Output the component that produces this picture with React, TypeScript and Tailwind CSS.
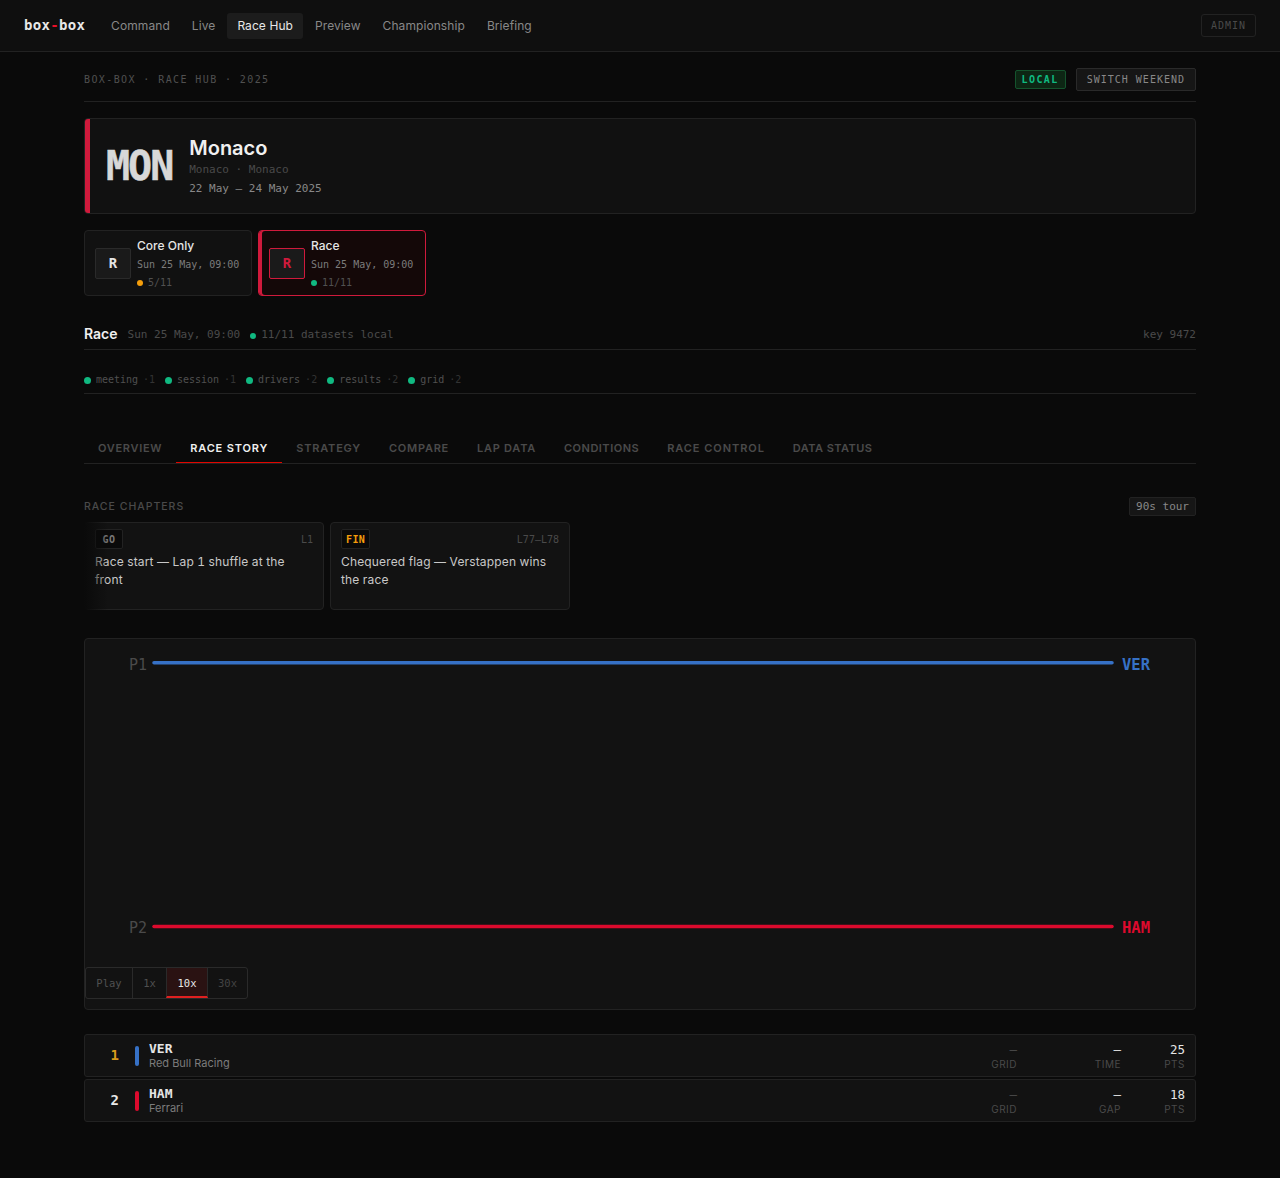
import React from "react";

const mono = "font-['DejaVu_Sans_Mono','Liberation_Mono',monospace]";

const nav = ["Command", "Live", "Race Hub", "Preview", "Championship", "Briefing"];
const tabs: [string, string][] = [
  ["OVERVIEW", "tracking-[0.7px]"],
  ["RACE STORY", "tracking-[0.85px]"],
  ["STRATEGY", "tracking-[0.8px]"],
  ["COMPARE", "tracking-[0.75px]"],
  ["LAP DATA", "tracking-[0.75px]"],
  ["CONDITIONS", "tracking-[0.5px]"],
  ["RACE CONTROL", "tracking-[0.95px]"],
  ["DATA STATUS", "tracking-[0.45px]"],
];
const datasets: [string, string][] = [["meeting", "1"], ["session", "1"], ["drivers", "2"], ["results", "2"], ["grid", "2"]];

function SessionCard({ title, count, dot, active }: { title: string; count: string; dot: string; active?: boolean }) {
  return (
    <div className={`flex h-[66px] w-[168px] items-center gap-[6px] rounded-[4px] border pl-[10px] ${active ? "border-[#d01a3c] bg-[#140808] shadow-[inset_3px_0_0_#d01a3c]" : "border-[#222222] bg-[#111111]"}`}>
      <div className={`flex h-[31px] w-[36px] items-center justify-center rounded-[2px] border bg-[#1a1a1a] text-[14px] font-bold ${mono} ${active ? "border-[#d01a3c] text-[#d01a3c]" : "border-[#2a2a2a] text-[#e5e5e5]"}`}>R</div>
      <div className="flex flex-col pt-[2px]">
        <div className="text-[12px] font-medium leading-[16px] text-[#e5e5e5]">{title}</div>
        <div className={`mt-[3px] text-[10px] leading-[16px] text-[#7c7c7c] ${mono}`}>Sun 25 May, 09:00</div>
        <div className={`mt-[2px] flex items-center gap-[5px] text-[10px] leading-[16px] text-[#505050] ${mono}`}>
          <span className={`h-[6px] w-[6px] rounded-full ${dot}`} />
          {count}
        </div>
      </div>
    </div>
  );
}

function Chapter({ tag, tagClass, laps, text }: { tag: string; tagClass: string; laps: string; text: string }) {
  return (
    <div className="h-[88px] w-[240px] rounded-[4px] border border-[#222222] bg-[#121212] px-[10px] pt-[6px]">
      <div className="flex items-center justify-between">
        <span className={`flex h-[20px] min-w-[28px] items-center justify-center rounded-[2px] border border-[#222222] bg-[#0a0a0a] px-[4px] text-[10px] font-bold tracking-[0.4px] ${mono} ${tagClass}`}>{tag}</span>
        <span className={`text-[10px] text-[#4a4a4a] ${mono}`}>{laps}</span>
      </div>
      <div className="mt-[4px] text-[12px] leading-[18px] tracking-[0.15px] tabular-nums text-[#c8c8c8]">{text}</div>
    </div>
  );
}

function Stat({ value, label, valueClass, wrap }: { value: string; label: string; valueClass: string; wrap: string }) {
  return (
    <div className={`flex w-[60px] flex-col items-end pt-[1px] ${wrap}`}>
      <div className={`mt-[1px] text-[12.5px] leading-[16px] ${mono} ${valueClass}`}>{value}</div>
      <div className="-mt-[1px] text-[10px] leading-[14px] tracking-[0.5px] text-[#4a4a4a]">{label}</div>
    </div>
  );
}

function ResultRow({ pos, posClass, code, team, color, l3, first }: { pos: string; posClass: string; code: string; team: string; color: string; l3: string; first: string }) {
  return (
    <div className="flex h-[43px] items-center rounded-[3px] border border-[#222222] bg-[#121212] pr-[10px]">
      <div className={`w-[34px] text-right text-[14px] font-bold ${mono} ${posClass}`}>{pos}</div>
      <div className={`ml-[16px] h-[20px] w-[4px] rounded-[2px] ${color}`} />
      <div className="ml-[10px] flex-1">
        <div className={`text-[13px] font-bold leading-[15px] text-[#e5e5e5] ${mono}`}>{code}</div>
        <div className="text-[11px] leading-[14px] text-[#7c7c7c]">{team}</div>
      </div>
      <Stat value="–" label="GRID" valueClass="text-[#4a4a4a]" wrap="" />
      <Stat value="—" label={l3} valueClass="text-[#e5e5e5]" wrap="ml-[44px]" />
      <Stat value={first} label="PTS" valueClass="text-[#e5e5e5]" wrap="ml-[4px]" />
    </div>
  );
}

export default function App() {
  return (
    <div className="min-h-[1178px] bg-[#0a0a0a] font-['Inter','Noto_Sans',sans-serif]">
      <header className="flex h-[52px] items-center border-b border-[#222222] bg-[#0f0f0f] px-[24px]">
        <div className={`text-[14px] font-bold tracking-[0.3px] text-[#e8e8e8] ${mono}`}>
          box<span className="text-[#e8102a]">-</span>box
        </div>
        <nav className="ml-[16px] flex items-center gap-[2px]">
          {nav.map((n) => (
            <div key={n} className={`flex h-[26px] items-center rounded-[3px] px-[10px] text-[12px] tracking-[0.08px] ${n === "Race Hub" ? "bg-[#1c1c1c] text-[#e8e8e8]" : "text-[#888888]"}`}>{n}</div>
          ))}
        </nav>
        <div className={`ml-auto flex h-[23px] items-center rounded-[3px] border border-[#222222] px-[9px] text-[10px] tracking-[1px] text-[#4a4a4a] ${mono}`}>ADMIN</div>
      </header>

      <main className="mx-auto w-[1160px] px-[24px]">
        <div className="flex h-[50px] items-center justify-between border-b border-[#222222] pt-[6px]">
          <div className={`text-[10px] tracking-[1.4px] text-[#505050] ${mono}`}>BOX-BOX · RACE HUB · 2025</div>
          <div className="flex items-center gap-[10px]">
            <span className={`flex h-[19px] items-center rounded-[2px] border border-[#14532d] bg-[#0d2614] px-[6px] text-[10px] font-bold tracking-[1.4px] text-[#10b981] ${mono}`}>LOCAL</span>
            <span className={`flex h-[23px] items-center rounded-[2px] border border-[#2a2a2a] bg-[#161616] px-[10px] text-[10px] tracking-[1px] text-[#888888] ${mono}`}>SWITCH WEEKEND</span>
          </div>
        </div>

        <section className="mt-[16px] flex h-[96px] items-center overflow-hidden rounded-[4px] border border-[#222222] bg-[#111111]">
          <div className="h-full w-[5px] bg-[#d01a3c]" />
          <div className={`ml-[16px] text-[40px] font-bold tracking-[-2px] text-[#d8d8d8] [-webkit-text-stroke:0.5px_#d8d8d8] ${mono}`}>MON</div>
          <div className="ml-[17px]">
            <div className="text-[20px] font-semibold leading-[24px] text-[#f0f0f0]">Monaco</div>
            <div className={`mt-[2px] text-[11px] leading-[16px] text-[#4a4a4a] ${mono}`}>Monaco · Monaco</div>
            <div className={`mt-[3px] text-[11px] leading-[16px] text-[#888888] ${mono}`}>22 May – 24 May 2025</div>
          </div>
        </section>

        <div className="mt-[16px] flex gap-[6px]">
          <SessionCard title="Core Only" count="5/11" dot="bg-[#f59e0b]" />
          <SessionCard title="Race" count="11/11" dot="bg-[#10b981]" active />
        </div>

        <div className="mt-[24px] flex h-[30px] items-center border-b border-[#222222] pt-[2px]">
          <div className="-translate-y-[2px] text-[14px] font-semibold text-[#f0f0f0]">Race</div>
          <div className={`ml-[10px] text-[11px] text-[#4a4a4a] ${mono}`}>Sun 25 May, 09:00</div>
          <span className="ml-[10px] h-[6px] w-[6px] rounded-full bg-[#10b981]" />
          <div className={`ml-[5px] text-[11px] text-[#4a4a4a] ${mono}`}>11/11 datasets local</div>
          <div className={`ml-auto text-[11px] text-[#4a4a4a] ${mono}`}>key 9472</div>
        </div>

        <div className="flex h-[44px] items-end border-b border-[#222222] pb-[6px]">
          <div className="flex items-center gap-[10px]">
            {datasets.map(([n, c]) => (
              <div key={n} className={`flex items-center text-[10px] leading-[14px] tracking-[-0.02px] ${mono}`}>
                <span className="h-[7px] w-[7px] rounded-full bg-[#10b981]" />
                <span className="ml-[5px] text-[#505050]">{n}</span>
                <span className="ml-[5px] text-[#333333]">·{c}</span>
              </div>
            ))}
          </div>
        </div>

        <div className="mt-[38px] flex h-[32px] border-b border-[#222222]">
          {tabs.map(([t, tr]) => (
            <div key={t} className={`flex items-center border-b-[1px] px-[14px] pt-[2px] text-[11px] font-semibold ${tr} ${t === "RACE STORY" ? "border-[#e10600] text-[#f0f0f0]" : "border-transparent text-[#4a4a4a]"}`}>{t}</div>
          ))}
        </div>

        <div className="mt-[33px] flex h-[19px] items-center justify-between">
          <div className="text-[10.5px] font-medium tracking-[1px] text-[#4a4a4a]">RACE CHAPTERS</div>
          <div className={`flex h-[19px] items-center rounded-[2px] border border-[#222222] bg-[#161616] px-[6px] pt-[1px] text-[11px] text-[#888888] ${mono}`}>90s tour</div>
        </div>

        <div className="relative mt-[6px] flex gap-[6px]">
          <Chapter tag="GO" tagClass="text-[#777777]" laps="L1" text="Race start — Lap 1 shuffle at the front" />
          <Chapter tag="FIN" tagClass="text-[#f59e0b]" laps="L77–L78" text="Chequered flag — Verstappen wins the race" />
          <div className="absolute left-0 top-0 h-full w-[24px] bg-gradient-to-r from-[#0a0a0a] to-transparent" />
        </div>

        <section className="mt-[28px] h-[372px] rounded-[4px] border border-[#222222] bg-[#121212]">
          <svg className="block h-[328px] w-full" viewBox="0 0 1110 328">
            <text x="62" y="30.5" textAnchor="end" fontSize="15" fill="#4a4a4a" fontFamily="'DejaVu Sans Mono', monospace">P1</text>
            <line x1="69" y1="23.7" x2="1027" y2="23.7" stroke="#3671c6" strokeWidth="3.5" strokeLinecap="round" />
            <text x="1037" y="30.5" fontSize="15.5" fontWeight="700" fill="#3671c6" fontFamily="'DejaVu Sans Mono', monospace">VER</text>
            <text x="62" y="293.5" textAnchor="end" fontSize="15" fill="#4a4a4a" fontFamily="'DejaVu Sans Mono', monospace">P2</text>
            <line x1="69" y1="287.4" x2="1027" y2="287.4" stroke="#dc0a2d" strokeWidth="3.5" strokeLinecap="round" />
            <text x="1037" y="293.5" fontSize="15.5" fontWeight="700" fill="#dc0a2d" fontFamily="'DejaVu Sans Mono', monospace">HAM</text>
          </svg>
          <div className={`flex h-[32px] w-[163px] overflow-hidden rounded-[3px] border border-[#2a2a2a] text-[10.5px] ${mono}`}>
            <div className="flex w-[47px] items-center justify-center border-r border-[#2a2a2a] pt-[2px] text-[#505050]">Play</div>
            <div className="flex w-[33px] items-center justify-center pt-[2px] text-[#505050]">1x</div>
            <div className="flex w-[42px] items-center justify-center border-x border-[#2a2a2a] border-b-2 border-b-[#e02020] bg-[#2a1212] pt-[4px] text-[#e8e8e8]">10x</div>
            <div className="flex flex-1 items-center justify-center pt-[2px] text-[#444444]">30x</div>
          </div>
        </section>

        <div className="mt-[24px] flex flex-col gap-[2px]">
          <ResultRow pos="1" posClass="text-[#d99a1c]" code="VER" team="Red Bull Racing" color="bg-[#3671c6]" l3="TIME" first="25" />
          <ResultRow pos="2" posClass="text-[#e8e8e8]" code="HAM" team="Ferrari" color="bg-[#dc0a2d]" l3="GAP" first="18" />
        </div>
      </main>
    </div>
  );
}
